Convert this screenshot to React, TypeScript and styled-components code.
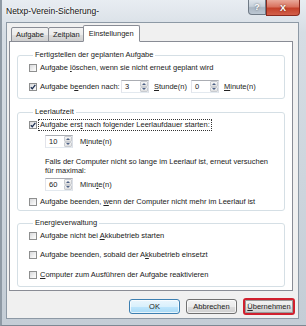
import styled, { createGlobalStyle } from 'styled-components';

const GlobalStyle = createGlobalStyle`
  html, body {
    margin: 0;
    padding: 0;
  }
  body {
    font-family: "Liberation Sans", Arial, sans-serif;
    font-size: 7.5px;
    color: #222;
  }
`;

const Window = styled.div`
  width: 306px;
  height: 326px;
  box-sizing: border-box;
  display: flex;
  flex-direction: column;
  padding: 0 7px 6px 4px;
  background: linear-gradient(180deg, #e8edf2 0%, #d6dde4 10%, #c4cdd6 100%);
  border-left: 2px solid #8f9aa5;
  border-bottom: 1px solid #7d8893;
`;

const TitleBar = styled.div`
  height: 22px;
  display: flex;
  align-items: flex-start;
`;

const Title = styled.div`
  font-size: 8.5px;
  line-height: 22px;
  color: #111;
  text-shadow: 0 0 4px #fff, 0 0 2px #fff;
`;

const CaptionButtons = styled.div`
  margin-left: auto;
  margin-right: -1px;
  display: flex;
`;

const CaptionButton = styled.div<{ $close?: boolean }>`
  width: ${(p) => (p.$close ? 34 : 18)}px;
  height: ${(p) => (p.$close ? 16 : 15)}px;
  box-sizing: border-box;
  display: flex;
  align-items: center;
  justify-content: center;
  font-size: 9px;
  font-weight: bold;
  color: #fff;
  border: 1px solid ${(p) => (p.$close ? '#8a2a1e' : '#6f7a86')};
  border-top: none;
  border-radius: ${(p) => (p.$close ? '0 0 4px 0' : '0 0 0 4px')};
  background: ${(p) =>
    p.$close
      ? 'linear-gradient(180deg, #e9a99a 0%, #d9735f 45%, #c4412a 55%, #d2604a 100%)'
      : 'linear-gradient(180deg, #dfe5eb 0%, #c6d0da 45%, #aab6c3 55%, #bcc7d2 100%)'};
  text-shadow: 0 0 2px rgba(0, 0, 0, 0.6);
`;

const Client = styled.div`
  flex: 1;
  min-height: 0;
  display: flex;
  flex-direction: column;
  background: #f0f0f0;
  border: 1px solid #8d99a5;
  padding: 2px 5px 3px 2px;
`;

const TabStrip = styled.div`
  height: 17px;
  flex-shrink: 0;
  display: flex;
  align-items: flex-end;
  padding-left: 2px;
  margin-bottom: -1px;
  position: relative;
  z-index: 1;
`;

const Tab = styled.div<{ $active?: boolean }>`
  height: ${(p) => (p.$active ? 17 : 15)}px;
  box-sizing: border-box;
  line-height: ${(p) => (p.$active ? 15 : 13)}px;
  padding: 0 ${(p) => (p.$active ? 5 : 4)}px;
  margin-right: -1px;
  margin-left: ${(p) => (p.$active ? -1 : 0)}px;
  border: 1px solid #898c95;
  border-bottom-color: ${(p) => (p.$active ? '#fff' : '#898c95')};
  border-radius: 2px 2px 0 0;
  background: ${(p) =>
    p.$active
      ? '#fff'
      : 'linear-gradient(180deg, #f2f2f2 0%, #ebebeb 50%, #dddddd 51%, #cfcfcf 100%)'};
  position: relative;
  z-index: ${(p) => (p.$active ? 2 : 1)};
`;

const Panel = styled.div`
  flex: 1;
  min-height: 0;
  background: #fff;
  border: 1px solid #898c95;
  padding: 8px 7px 6px 7px;
  display: flex;
  flex-direction: column;
`;

const Group = styled.fieldset<{ $gap?: number; $pb?: number }>`
  margin: 0 0 ${(p) => p.$gap ?? 0}px 0;
  min-inline-size: 0;
  padding: 1px 11px ${(p) => p.$pb ?? 5}px 11px;
  border: 1px solid #d5dfe5;
  border-radius: 3px;
  display: flex;
  flex-direction: column;
`;

const Legend = styled.legend`
  padding: 0 2px;
  margin-left: 4px;
  line-height: 10px;
`;

const CheckRow = styled.label<{ $mt?: number }>`
  display: flex;
  align-items: center;
  height: 12px;
  margin-top: ${(p) => p.$mt ?? 0}px;
  white-space: nowrap;
`;

const Box = styled.span`
  width: 8px;
  height: 8px;
  box-sizing: border-box;
  border: 1px solid #8e8f8f;
  background: linear-gradient(135deg, #d8d9db 0%, #f4f4f4 70%, #fdfdfd 100%);
  margin-right: 3px;
  display: flex;
  align-items: center;
  justify-content: center;
  flex-shrink: 0;
`;

const Caption = styled.span<{ $focus?: boolean }>`
  border: 1px dotted ${(p) => (p.$focus ? '#333' : 'transparent')};
  padding: 0 1px;
  margin-left: -2px;
  line-height: 10px;
`;

const Row = styled.div<{ $mt?: number; $indent?: number }>`
  display: flex;
  align-items: center;
  height: 13px;
  margin-top: ${(p) => p.$mt ?? 0}px;
  margin-left: ${(p) => p.$indent ?? 0}px;
  white-space: nowrap;
`;

const FieldLabel = styled.span<{ $w?: number }>`
  width: ${(p) => (p.$w ? `${p.$w}px` : 'auto')};
  flex-shrink: 0;
`;

const Spin = styled.div<{ $gap?: number }>`
  width: 28px;
  height: 13px;
  box-sizing: border-box;
  display: flex;
  border: 1px solid #abadb3;
  border-color: #abadb3 #dbdfe6 #e3e9ef #e2e3ea;
  background: #fff;
  margin-right: ${(p) => p.$gap ?? 5}px;
  flex-shrink: 0;
`;

const SpinValue = styled.span`
  flex: 1;
  padding-left: 3px;
  line-height: 11px;
`;

const SpinArrows = styled.div`
  width: 8px;
  display: flex;
  flex-direction: column;
`;

const Arrow = styled.div`
  flex: 1;
  display: flex;
  align-items: center;
  justify-content: center;
  background: linear-gradient(180deg, #f6f6f6 0%, #dedede 100%);
  border: 1px solid #c9ccd1;
  border-radius: 1px;
`;

const Note = styled.div`
  margin-top: 10px;
  margin-left: 16px;
  line-height: 8.5px;
`;

const ButtonRow = styled.div`
  display: flex;
  flex-shrink: 0;
  justify-content: flex-end;
  align-items: center;
  gap: 6px;
  margin-top: 7px;
  height: 17px;
  margin-right: -2px;
`;

const Button = styled.div<{ $default?: boolean; $marked?: boolean }>`
  width: ${(p) => (p.$marked ? 52 : 51)}px;
  height: ${(p) => (p.$marked ? 17 : 15)}px;
  box-sizing: border-box;
  display: flex;
  align-items: center;
  justify-content: center;
  border-radius: 3px;
  border: ${(p) =>
    p.$marked ? '2px solid #d0202e' : p.$default ? '1px solid #3c7fb1' : '1px solid #707070'};
  background: ${(p) =>
    p.$default
      ? 'linear-gradient(180deg, #eaf6fd 0%, #d9f0fc 50%, #bee6fd 51%, #a7d9f5 100%)'
      : 'linear-gradient(180deg, #f2f2f2 0%, #ebebeb 50%, #dddddd 51%, #cfcfcf 100%)'};
  box-shadow: ${(p) => (p.$marked ? 'inset 0 0 0 1px #9a9a9a' : 'inset 0 0 0 1px rgba(255,255,255,0.7)')};
`;

function Check({ checked }: { checked?: boolean }) {
  return (
    <Box>
      {checked ? (
        <svg width="6" height="6" viewBox="0 0 6 6">
          <path d="M0.8 3.2 L2.3 4.8 L5.3 0.8" fill="none" stroke="#1d2f52" strokeWidth="1.3" />
        </svg>
      ) : null}
    </Box>
  );
}

function SpinBox({ value, gap }: { value: string; gap?: number }) {
  return (
    <Spin $gap={gap}>
      <SpinValue>{value}</SpinValue>
      <SpinArrows>
        <Arrow>
          <svg width="4" height="2" viewBox="0 0 4 2">
            <path d="M0 2 L2 0 L4 2 Z" fill="#4d6185" />
          </svg>
        </Arrow>
        <Arrow>
          <svg width="4" height="2" viewBox="0 0 4 2">
            <path d="M0 0 L2 2 L4 0 Z" fill="#4d6185" />
          </svg>
        </Arrow>
      </SpinArrows>
    </Spin>
  );
}

function App() {
  return (
    <>
      <GlobalStyle />
      <Window>
        <TitleBar>
          <Title>Netxp-Verein-Sicherung-</Title>
          <CaptionButtons>
            <CaptionButton>?</CaptionButton>
            <CaptionButton $close>X</CaptionButton>
          </CaptionButtons>
        </TitleBar>
        <Client>
          <TabStrip>
            <Tab>Aufgabe</Tab>
            <Tab>Zeitplan</Tab>
            <Tab $active>Einstellungen</Tab>
          </TabStrip>
          <Panel>
            <Group $gap={8}>
              <Legend>Fertigstellen der geplanten Aufgabe</Legend>
              <CheckRow $mt={1}>
                <Check />
                <Caption>
                  Aufgabe <u>l</u>öschen, wenn sie nicht erneut geplant wird
                </Caption>
              </CheckRow>
              <Row $mt={6}>
                <Check checked />
                <FieldLabel $w={81}>
                  Aufgabe b<u>e</u>enden nach:
                </FieldLabel>
                <SpinBox value="3" />
                <FieldLabel $w={37}>
                  <u>S</u>tunde(n)
                </FieldLabel>
                <SpinBox value="0" />
                <FieldLabel>
                  <u>M</u>inute(n)
                </FieldLabel>
              </Row>
            </Group>

            <Group $gap={7} $pb={2}>
              <Legend>Leerlaufzeit</Legend>
              <CheckRow $mt={1}>
                <Check checked />
                <Caption $focus>
                  Aufgabe ers<u>t</u> nach folgender Leerlaufdauer starten:
                </Caption>
              </CheckRow>
              <Row $mt={4} $indent={16}>
                <SpinBox value="10" gap={7} />
                <FieldLabel>
                  M<u>i</u>nute(n)
                </FieldLabel>
              </Row>
              <Note>
                Falls der Computer nicht so lange im Leerlauf ist, erneut versuchen
                <br />
                für maximal:
              </Note>
              <Row $mt={3} $indent={16}>
                <SpinBox value="60" gap={7} />
                <FieldLabel>
                  Minu<u>t</u>e(n)
                </FieldLabel>
              </Row>
              <CheckRow $mt={5}>
                <Check />
                <Caption>
                  Aufgabe beenden, <u>w</u>enn der Computer nicht mehr im Leerlauf ist
                </Caption>
              </CheckRow>
            </Group>

            <Group>
              <Legend>Energieverwaltung</Legend>
              <CheckRow $mt={1}>
                <Check />
                <Caption>
                  Aufgabe nicht bei <u>A</u>kkubetrieb starten
                </Caption>
              </CheckRow>
              <CheckRow $mt={7}>
                <Check />
                <Caption>
                  Aufgabe beenden, sobald der A<u>k</u>kubetrieb einsetzt
                </Caption>
              </CheckRow>
              <CheckRow $mt={8}>
                <Check />
                <Caption>
                  <u>C</u>omputer zum Ausführen der Aufgabe reaktivieren
                </Caption>
              </CheckRow>
            </Group>
          </Panel>
          <ButtonRow>
            <Button $default>OK</Button>
            <Button>Abbrechen</Button>
            <Button $marked>
              <span>
                <u>Ü</u>bernehmen
              </span>
            </Button>
          </ButtonRow>
        </Client>
      </Window>
    </>
  );
}

export default App;
